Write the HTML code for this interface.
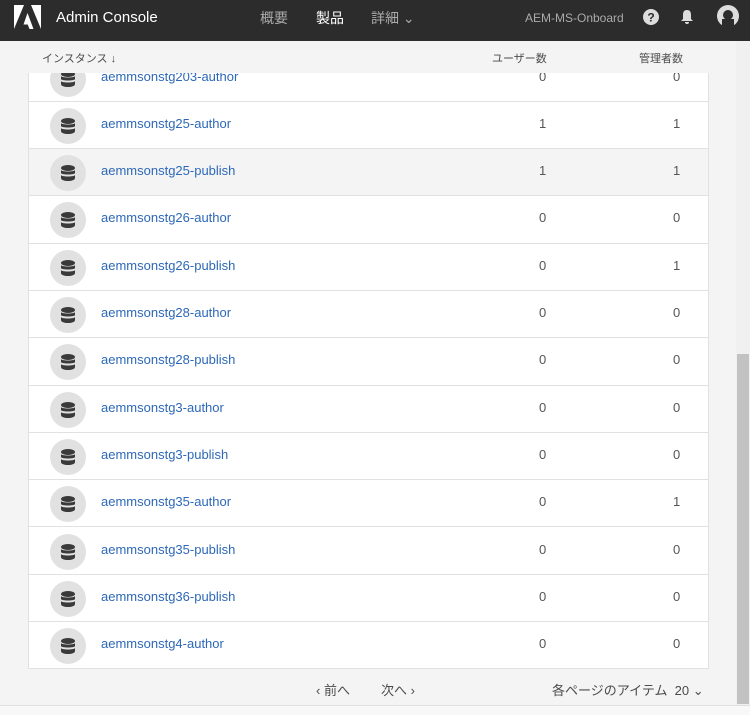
<!DOCTYPE html>
<html><head><meta charset="utf-8"><style>
*{margin:0;padding:0;box-sizing:border-box}
body{width:750px;height:715px;overflow:hidden;background:#f4f4f4;font-family:"Liberation Sans","Noto Sans CJK JP",sans-serif;position:relative}
.top{position:absolute;left:0;top:0;width:750px;height:41px;background:#2c2c2c;color:#fff}
.top .t{position:absolute;top:0;line-height:36px;font-size:15px}
.hdr{position:absolute;left:28px;top:41px;width:680px;height:32px;font-size:11px;color:#4b4b4b}
.card{position:absolute;left:28px;top:54px;width:681px;height:615px;background:#fff;border:1px solid #e1e1e1;overflow:hidden}
.row{position:absolute;left:0;width:680px;height:47.3px;border-bottom:1px solid #e1e1e1}
.ic{position:absolute;left:21px;top:6px;width:36px;height:36px;border-radius:50%;background:#e1e1e1}
.ic svg{position:absolute;left:11px;top:10px}
.nm{position:absolute;left:72px;top:14px;font-size:13px;color:#2d68b8}
.n1,.n2{position:absolute;top:14px;font-size:13px;color:#555}
.n1{left:510px}.n2{left:644px}
.cover{position:absolute;left:28px;top:41px;width:681px;height:32px;background:#f4f4f4}
.sb{position:absolute;left:736px;top:41px;width:14px;height:664px;background:#f0f0f0}
.th{position:absolute;left:737px;top:354px;width:12px;height:350px;background:#c2c2c2}
.foot{position:absolute;top:680px;font-size:13px;color:#4b4b4b}
.bot{position:absolute;left:0;top:705px;width:750px;height:10px;background:#f8f8f8;border-top:1px solid #e0e0e0}
</style></head><body>
<div class="top">
<svg style="position:absolute;left:14px;top:5px" width="27" height="24" viewBox="0 0 27 24"><path d="M0 0h10L0 24z" fill="#fff"/><path d="M17 0h10v24z" fill="#fff"/><path d="M13.5 8l6 16h-4l-1.8-4.5h-4.2z" fill="#fff"/></svg>
<span class="t" style="left:56px">Admin Console</span>
<span class="t" style="left:260px;color:#aaa;font-size:14px">概要</span>
<span class="t" style="left:316px;font-size:14px">製品</span>
<span class="t" style="left:371px;color:#aaa;font-size:14px">詳細 ⌄</span>
<span class="t" style="left:525px;color:#aaa;font-size:12px">AEM-MS-Onboard</span>
<svg style="position:absolute;left:643px;top:9px" width="16" height="16"><circle cx="8" cy="8" r="8" fill="#ddd"/><text x="8" y="12.5" font-size="12" font-weight="bold" text-anchor="middle" fill="#2c2c2c" font-family="Liberation Sans">?</text></svg>
<svg style="position:absolute;left:680px;top:9px" width="14" height="16"><path d="M7 1c3 0 4 2 4 5v4l2 2H1l2-2V6c0-3 1-5 4-5z M5 13h4a2 2 0 0 1-4 0z" fill="#ddd"/></svg>
<svg style="position:absolute;left:717px;top:5px" width="22" height="22"><circle cx="11" cy="11" r="11" fill="#ddd"/><circle cx="11" cy="10" r="5" fill="#2c2c2c"/><path d="M5 22v-8h12v8z" fill="#2c2c2c"/></svg>
</div>
<div class="card" id="c"></div>
<div class="cover"></div>
<div class="hdr"><span style="position:absolute;left:14px;top:9px">インスタンス ↓</span><span style="position:absolute;left:464px;top:9px">ユーザー数</span><span style="position:absolute;left:611px;top:9px">管理者数</span></div>
<div class="sb"></div><div class="th"></div>
<span class="foot" style="left:316px">‹ 前へ</span>
<span class="foot" style="left:381px">次へ ›</span>
<span class="foot" style="left:552px">各ページのアイテム&nbsp; 20 ⌄</span>
<div class="bot"></div>
<script>
var d=[["aemmsonstg203-author",0,0],["aemmsonstg25-author",1,1],["aemmsonstg25-publish",1,1],["aemmsonstg26-author",0,0],["aemmsonstg26-publish",0,1],["aemmsonstg28-author",0,0],["aemmsonstg28-publish",0,0],["aemmsonstg3-author",0,0],["aemmsonstg3-publish",0,0],["aemmsonstg35-author",0,1],["aemmsonstg35-publish",0,0],["aemmsonstg36-publish",0,0],["aemmsonstg4-author",0,0]];
var h="";d.forEach(function(r,i){h+='<div class="row" style="top:'+(i*47.3-0.5)+'px;'+(i==2?'background:#f4f4f4':'')+'"><div class="ic"><svg width="14" height="16" viewBox="0 0 14 16"><ellipse cx="7" cy="3" rx="7" ry="3" fill="#3a3a3a"/><path d="M0 5c0 2 14 2 14 0v3c0 2-14 2-14 0z M0 10c0 2 14 2 14 0v3c0 4-14 4-14 0z" fill="#3a3a3a"/></svg></div><span class="nm">'+r[0]+'</span><span class="n1">'+r[1]+'</span><span class="n2">'+r[2]+'</span></div>'});
document.getElementById("c").innerHTML=h;
</script>
</body></html>
